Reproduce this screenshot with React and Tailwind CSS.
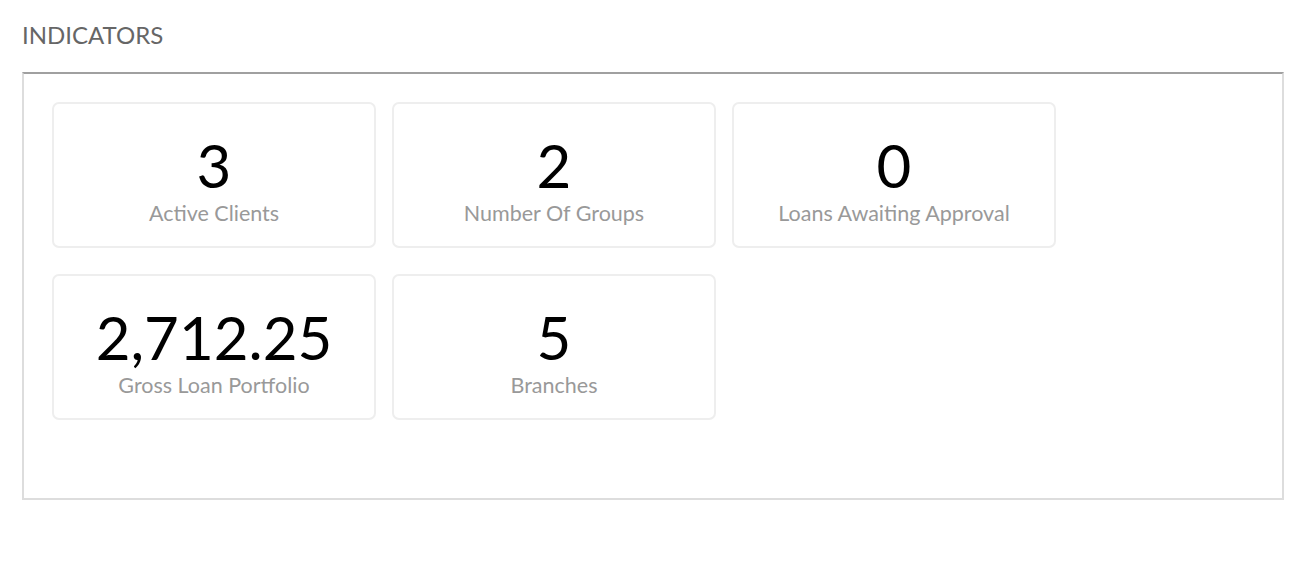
import React from "react";

const indicators = [
  { value: "3", label: "Active Clients" },
  { value: "2", label: "Number Of Groups" },
  { value: "0", label: "Loans Awaiting Approval" },
  { value: "2,712.25", label: "Gross Loan Portfolio" },
  { value: "5", label: "Branches" },
];

const IndicatorCard = ({ value, label }) => (
  <div className="w-[324px] h-[146px] flex flex-col items-center border-2 border-[#eeeeee] rounded-[7px] pt-[26px]">
    <div className="text-[60px] leading-[70px] text-black">{value}</div>
    <div className="mt-px text-[21.5px] leading-[24px] text-[#999999]">{label}</div>
  </div>
);

export default function App() {
  return (
    <div
      className="min-h-[562px] bg-white pl-[22px] pr-[18px] pt-[20px]"
      style={{ fontFamily: "Lato, 'Noto Sans', sans-serif" }}
    >
      <h2 className="text-[24px] leading-[30px] text-[#666666] mb-[22px]">INDICATORS</h2>
      <div className="border-2 border-[#dddddd] border-t-[#a0a0a0] pt-[28px] px-[28px] pb-[78px]">
        <div className="flex flex-wrap gap-x-4 gap-y-[26px]">
          {indicators.map((item) => (
            <IndicatorCard key={item.label} value={item.value} label={item.label} />
          ))}
        </div>
      </div>
    </div>
  );
}
